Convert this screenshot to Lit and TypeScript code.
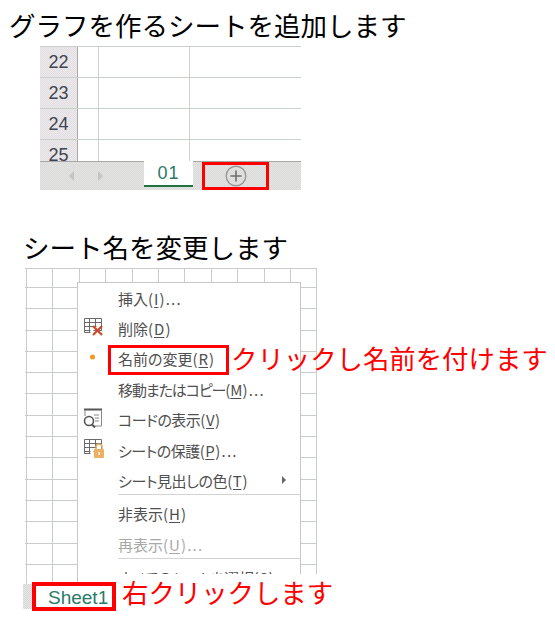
import { html, svg, css, LitElement } from 'lit';
import { customElement } from 'lit/decorators.js';

type MenuRow = { label: string; key?: string; tail?: string; icon?: string; arrow?: boolean; off?: boolean; sep?: boolean; track?: number };

// track: per-row letter spacing, kana in the reference runs tighter than kanji
const menuRows: MenuRow[] = [
	{ label: '挿入(', key: 'I', tail: ')...' },
	{ label: '削除(', key: 'D', tail: ')', icon: 'delete' },
	{ label: '名前の変更(', key: 'R', tail: ')', icon: 'dot' },
	{ label: '移動またはコピー(', key: 'M', tail: ')...', track: -1.1 },
	{ label: 'コードの表示(', key: 'V', tail: ')', icon: 'code', track: -0.5 },
	{ label: 'シートの保護(', key: 'P', tail: ')...', icon: 'lock', track: -0.5 },
	{ label: 'シート見出しの色(', key: 'T', tail: ')', arrow: true, sep: true, track: -0.4 },
	{ label: '非表示(', key: 'H', tail: ')' },
	{ label: '再表示(', key: 'U', tail: ')...', off: true, sep: true },
	{ label: 'すべてのシートを選択(', key: 'S', tail: ')', track: -0.4 },
];

const miniGrid = svg`
	<path d="M1.5 1.5h17v12h-8M1.5 1.5v14h6M1.5 5.5h17M1.5 9.5h12M1.5 13.5h6M6.5 1.5v14M12.5 1.5v8" fill="none" stroke="#6a6a6a" stroke-width="1" />
`;

@customElement('app-root')
export class AppRoot extends LitElement {
	static styles = css`
		:host {
			display: block;
			width: 555px;
			height: 626px;
			overflow: hidden;
			background: #fff;
			font-family: "Noto Sans CJK JP", "Liberation Sans", sans-serif;
		}
		.title {
			margin: 0;
			font-size: 26.5px;
			font-weight: 400;
			line-height: 26px;
			color: #000;
			white-space: nowrap;
		}
		.title.first {
			padding: 12px 0 3px 9px;
		}
		.title.second {
			padding: 44px 0 8px 23px;
		}

		/* first picture */
		.book {
			width: 261px;
			margin-left: 40px;
		}
		.rows {
			height: 120px;
			overflow: hidden;
			padding-top: 5px;
			box-sizing: border-box;
		}
		.row {
			display: grid;
			grid-template-columns: 38px 21px 91px 1fr;
			height: 31px;
			border-top: 1px solid #c9cfc9;
			box-sizing: border-box;
		}
		.row b {
			font: 400 18px/30px "Liberation Sans", sans-serif;
			color: #3f4450;
			text-align: center;
			background: repeating-conic-gradient(#e2dde4 0 25%, #ecebea 0 50%) 0 0 / 2px 2px;
			border-right: 1px solid #a9a9ad;
		}
		.row i {
			border-right: 1px solid #cfd2cf;
		}
		.row i:last-child {
			border: 0;
		}
		.tabs {
			display: flex;
			height: 29px;
			border-top: 1px solid #a8a8a8;
			box-sizing: border-box;
			background: repeating-conic-gradient(#d9dbdb 0 25%, #e6e4e2 0 50%) 0 0 / 2px 2px;
		}
		.nav {
			display: flex;
			gap: 22px;
			align-items: center;
			padding-left: 29px;
			width: 104px;
			box-sizing: border-box;
		}
		.nav svg {
			display: block;
		}
		.tab {
			width: 49px;
			height: 24px;
			margin-top: -1px;
			background: #fff;
			border-bottom: 2px solid #217346;
			text-align: center;
			font: 400 18px/24px "Liberation Sans", sans-serif;
			letter-spacing: 1px;
			color: #2a7a68;
		}
		.add {
			display: flex;
			align-items: center;
			justify-content: center;
			width: 67px;
			height: 28px;
			margin-left: 9px;
			border: 3px solid #f00;
			box-sizing: border-box;
		}

		/* second picture */
		.sheet {
			position: relative;
			height: 317px;
			width: 292px;
			margin-left: 25px;
			background-color: #fff;
			background-image:
				repeating-linear-gradient(90deg, #c9cdc9 0 1px, transparent 1px 26.4px),
				repeating-linear-gradient(180deg, #c9cdc9 0 1px, transparent 1px 21.3px);
			background-position: 1px 0, 0 19px;
		}
		.menu {
			position: absolute;
			left: 52px;
			top: 14px;
			width: 224px;
			height: 303px;
			overflow: hidden;
			box-sizing: border-box;
			background: #fff;
			border: 1px solid #c6c6c6;
			border-bottom: 0;
		}
		.item {
			position: relative;
			display: flex;
			align-items: center;
			height: 30.4px;
			padding-left: 40px;
			font-size: 15px;
			font-feature-settings: "palt";
			color: #505050;
			white-space: pre;
		}
		.item.off {
			color: #a8a8a8;
		}
		.item u {
			text-underline-offset: 2px;
			padding: 0 1px;
		}
		.item em {
			font-style: normal;
			letter-spacing: 1.2px;
		}
		.item svg {
			position: absolute;
			left: 5px;
			top: 1px;
		}
		.item .arrow {
			position: absolute;
			left: 204px;
			top: 11px;
			width: 0;
			height: 0;
			border-left: 4px solid #666;
			border-top: 4px solid transparent;
			border-bottom: 4px solid transparent;
		}
		.sep {
			height: 1px;
			margin: -2px 0 4px 40px;
			background: #d4d4d4;
		}
		.mask {
			position: absolute;
			left: 53px;
			right: -1px;
			top: 306px;
			bottom: 0;
			background: #fff;
		}
		.callout {
			position: absolute;
			left: 83px;
			top: 77px;
			display: flex;
			align-items: center;
			gap: 2px;
			white-space: nowrap;
		}
		.callout .box {
			display: block;
			width: 121px;
			height: 30px;
			border: 3px solid #f00;
			box-sizing: border-box;
		}
		.note {
			font-size: 26.4px;
			line-height: 30px;
			color: #f00;
		}
		.callout .note {
			margin-top: -4px;
		}
		.bottom {
			display: flex;
			align-items: center;
			height: 29px;
			margin: -3px 0 0 23px;
			position: relative;
			white-space: nowrap;
		}
		.strip {
			width: 9px;
			height: 25px;
			background: repeating-conic-gradient(#d5d5d5 0 25%, #e9e9e9 0 50%) 0 0 / 2px 2px;
		}
		.current {
			width: 84px;
			height: 29px;
			border: 4px solid #f00;
			box-sizing: border-box;
			background: #fff;
			padding-left: 12px;
			font: 400 19px/23px "Liberation Sans", sans-serif;
			color: #2a7a68;
			overflow: hidden;
		}
		.bottom .note {
			margin: -10px 0 0 6px;
		}
	`;

	private renderIcon(name?: string) {
		if (name === 'dot') {
			return html`<svg width="20" height="24" viewBox="0 0 20 24"><circle cx="9.5" cy="12" r="2.5" fill="#f39a1e" /></svg>`;
		}
		if (name === 'delete') {
			return html`<svg width="22" height="26" viewBox="0 0 22 26">
				<g transform="translate(0 3)">${miniGrid}</g>
				<path d="M10 12l9 9M19 12l-9 9" stroke="#d2492a" stroke-width="2.2" fill="none" />
			</svg>`;
		}
		if (name === 'code') {
			return html`<svg width="22" height="24" viewBox="0 0 22 24">
				<path d="M1 3.5h18" stroke="#555" stroke-width="2" />
				<path d="M18.5 4v16h-8M2 4v6M11 9h5M12 12h4M12 15h4" stroke="#888" fill="none" />
				<circle cx="6" cy="15" r="4.5" fill="#fff" stroke="#555" stroke-width="1.6" />
				<path d="M9 18.5l3 3" stroke="#555" stroke-width="2" />
			</svg>`;
		}
		if (name === 'lock') {
			return html`<svg width="22" height="26" viewBox="0 0 22 26">
				<g transform="translate(0 2)">${miniGrid}</g>
				<path d="M13 13v-2a3 3 0 0 1 6 0v2" fill="none" stroke="#e0a860" stroke-width="1.5" />
				<rect x="11" y="13" width="10" height="9" rx="1" fill="#eeb060" />
				<rect x="15.5" y="16" width="1.5" height="3" fill="#fff" />
			</svg>`;
		}
		return null;
	}

	render() {
		return html`
			<h1 class="title first">グラフを作るシートを追加します</h1>
			<div class="book">
				<div class="rows">
					${[22, 23, 24, 25].map((n) => html`<div class="row"><b>${n}</b><i></i><i></i><i></i></div>`)}
				</div>
				<div class="tabs">
					<div class="nav">
						<svg width="6" height="10" viewBox="0 0 6 10"><path d="M5 0v10L0 5z" fill="#c4c4c4" /></svg>
						<svg width="6" height="10" viewBox="0 0 6 10"><path d="M1 0v10l5-5z" fill="#c4c4c4" /></svg>
					</div>
					<div class="tab">01</div>
					<div class="add">
						<svg width="22" height="22" viewBox="0 0 22 22">
							<circle cx="11" cy="11" r="9.8" fill="none" stroke="#9a9a9a" stroke-width="1.4" />
							<path d="M11 5.5v11M5.5 11h11" stroke="#6e6e6e" stroke-width="1.6" />
						</svg>
					</div>
				</div>
			</div>

			<h1 class="title second">シート名を変更します</h1>
			<div class="sheet">
				<div class="menu">
					${menuRows.map(
						(r) => html`
							<div class="item ${r.off ? 'off' : ''}">${this.renderIcon(r.icon)}<span style="letter-spacing: ${r.track ?? 0}px">${r.label}<u>${r.key}</u><em>${r.tail}</em></span>${r.arrow ? html`<span class="arrow"></span>` : null}</div>
							${r.sep ? html`<div class="sep"></div>` : null}
						`,
					)}
				</div>
				<div class="mask"></div>
				<div class="callout">
					<span class="box"></span>
					<span class="note">クリックし名前を付けます</span>
				</div>
			</div>
			<div class="bottom">
				<div class="strip"></div>
				<div class="current">Sheet1</div>
				<span class="note">右クリックします</span>
			</div>
		`;
	}
}
